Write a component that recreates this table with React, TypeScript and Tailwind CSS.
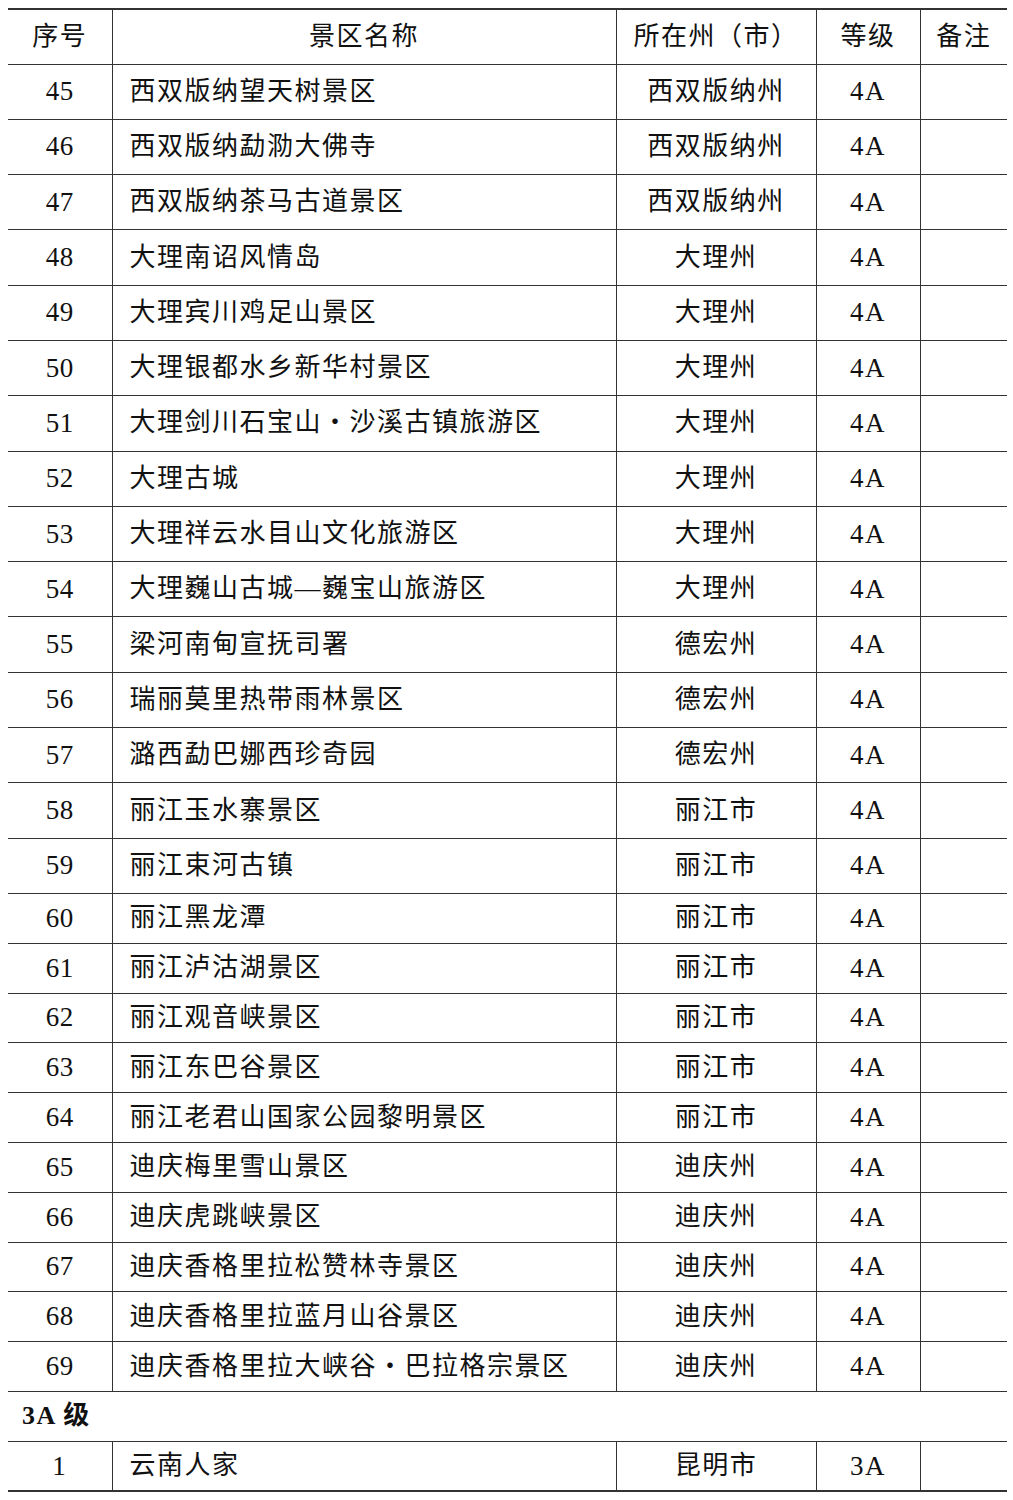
const rows4A: [number, string, string][] = [
  [45, '西双版纳望天树景区', '西双版纳州'],
  [46, '西双版纳勐泐大佛寺', '西双版纳州'],
  [47, '西双版纳茶马古道景区', '西双版纳州'],
  [48, '大理南诏风情岛', '大理州'],
  [49, '大理宾川鸡足山景区', '大理州'],
  [50, '大理银都水乡新华村景区', '大理州'],
  [51, '大理剑川石宝山・沙溪古镇旅游区', '大理州'],
  [52, '大理古城', '大理州'],
  [53, '大理祥云水目山文化旅游区', '大理州'],
  [54, '大理巍山古城—巍宝山旅游区', '大理州'],
  [55, '梁河南甸宣抚司署', '德宏州'],
  [56, '瑞丽莫里热带雨林景区', '德宏州'],
  [57, '潞西勐巴娜西珍奇园', '德宏州'],
  [58, '丽江玉水寨景区', '丽江市'],
  [59, '丽江束河古镇', '丽江市'],
  [60, '丽江黑龙潭', '丽江市'],
  [61, '丽江泸沽湖景区', '丽江市'],
  [62, '丽江观音峡景区', '丽江市'],
  [63, '丽江东巴谷景区', '丽江市'],
  [64, '丽江老君山国家公园黎明景区', '丽江市'],
  [65, '迪庆梅里雪山景区', '迪庆州'],
  [66, '迪庆虎跳峡景区', '迪庆州'],
  [67, '迪庆香格里拉松赞林寺景区', '迪庆州'],
  [68, '迪庆香格里拉蓝月山谷景区', '迪庆州'],
  [69, '迪庆香格里拉大峡谷・巴拉格宗景区', '迪庆州'],
]

const cell = 'border-x border-b border-[#333] p-0 align-middle'

export default function App() {
  return (
    <div
      className="bg-white pl-[8px] pt-[8px] text-[26px] leading-none tracking-[1.5px] text-[#111]"
      style={{ fontFamily: '"Liberation Serif", "Noto Sans CJK SC", serif' }}
    >
      <table className="w-[999px] table-fixed border-collapse border-t-2 border-b-2 border-[#333]">
        <colgroup>
          <col className="w-[104px]" />
          <col className="w-[504px]" />
          <col className="w-[200px]" />
          <col className="w-[104px]" />
          <col className="w-[87px]" />
        </colgroup>
        <thead>
          <tr className="h-[55px]">
            <th className={`${cell} border-l-0 text-center font-normal`}>序号</th>
            <th className={`${cell} text-center font-normal`}>景区名称</th>
            <th className={`${cell} text-center font-normal`}>所在州（市）</th>
            <th className={`${cell} text-center font-normal`}>等级</th>
            <th className={`${cell} border-r-0 text-center font-normal`}>备注</th>
          </tr>
        </thead>
        <tbody>
          {rows4A.map(([no, name, city]) => (
            <tr key={no} className={no < 60 ? 'h-[55.3px]' : 'h-[49.8px]'}>
              <td className={`${cell} border-l-0 text-center text-[27px] tracking-[0.5px]`}>{no}</td>
              <td className={`${cell} pl-[17px] text-left`}>{name}</td>
              <td className={`${cell} text-center`}>{city}</td>
              <td className={`${cell} text-center text-[27px]`}>4A</td>
              <td className={`${cell} border-r-0`}></td>
            </tr>
          ))}
          <tr className="h-[50px]">
            <td colSpan={5} className="border-b border-[#333] pl-[14px] text-left font-bold">
              3A 级
            </td>
          </tr>
          <tr className="h-[50px]">
            <td className={`${cell} border-b-0 border-l-0 text-center text-[27px]`}>1</td>
            <td className={`${cell} border-b-0 pl-[17px] text-left`}>云南人家</td>
            <td className={`${cell} border-b-0 text-center`}>昆明市</td>
            <td className={`${cell} border-b-0 text-center text-[27px]`}>3A</td>
            <td className={`${cell} border-b-0 border-r-0`}></td>
          </tr>
        </tbody>
      </table>
    </div>
  )
}
